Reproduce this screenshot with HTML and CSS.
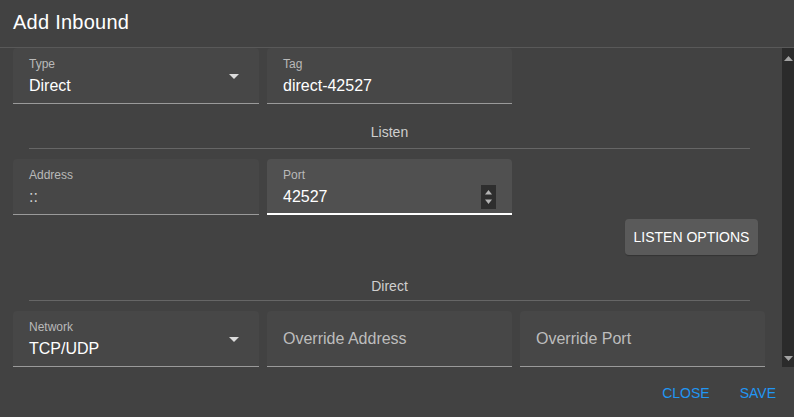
FILE: index.html
```html
<!DOCTYPE html>
<html>
<head>
<meta charset="utf-8">
<link rel="stylesheet" href="styles.css">
</head>
<body>
<div class="dialog">
  <header class="title">Add Inbound</header>
  <div class="body">
    <div class="content">
      <div class="row">
        <div class="field select">
          <div class="field-main">
            <div class="label">Type</div>
            <div class="value">Direct</div>
          </div>
          <svg class="caret" width="24" height="24" viewBox="0 0 24 24"><path d="M7 10l5 5 5-5z" fill="#dcdcdc"/></svg>
        </div>
        <div class="field">
          <div class="field-main">
            <div class="label">Tag</div>
            <div class="value">direct-42527</div>
          </div>
        </div>
      </div>

      <div class="divider listen"><span class="divider-text">Listen</span><div class="divider-line"></div></div>

      <div class="row">
        <div class="field">
          <div class="field-main">
            <div class="label">Address</div>
            <div class="value dim">::</div>
          </div>
        </div>
        <div class="field focused">
          <div class="field-main">
            <div class="label">Port</div>
            <div class="value">42527</div>
          </div>
          <div class="spinner">
            <svg width="15" height="24" viewBox="0 0 15 24"><path d="M4 9.5L7.5 5 11 9.5z" fill="#b4b4b4"/><path d="M4 14.5L7.5 19 11 14.5z" fill="#b4b4b4"/></svg>
          </div>
        </div>
      </div>

      <div class="btn-row"><button class="btn">LISTEN OPTIONS</button></div>

      <div class="divider direct"><span class="divider-text">Direct</span><div class="divider-line"></div></div>

      <div class="row">
        <div class="field select">
          <div class="field-main">
            <div class="label">Network</div>
            <div class="value">TCP/UDP</div>
          </div>
          <svg class="caret" width="24" height="24" viewBox="0 0 24 24"><path d="M7 10l5 5 5-5z" fill="#dcdcdc"/></svg>
        </div>
        <div class="field">
          <div class="placeholder">Override Address</div>
        </div>
        <div class="field">
          <div class="placeholder">Override Port</div>
        </div>
      </div>
    </div>
    <div class="scrollbar">
      <svg width="12" height="12" viewBox="0 0 12 12"><path d="M2 10L6.5 5 11 10z" fill="#a3a3a3"/></svg>
      <svg width="12" height="12" viewBox="0 0 12 12"><path d="M2 4L6.5 9 11 4z" fill="#a3a3a3"/></svg>
    </div>
  </div>
  <footer class="actions">
    <span class="action">CLOSE</span>
    <span class="action">SAVE</span>
  </footer>
</div>
</body>
</html>
```

FILE: styles.css
```css
* { box-sizing: border-box; }
html, body {
  margin: 0;
  padding: 0;
  background: #424242;
  width: 794px;
  height: 417px;
  overflow: hidden;
  font-family: "Liberation Sans", Arial, sans-serif;
  color: #fff;
}
.dialog {
  width: 794px;
  height: 417px;
  display: flex;
  flex-direction: column;
  background: #424242;
}
.title {
  height: 48px;
  line-height: 45px;
  padding-left: 13px;
  font-size: 20px;
  letter-spacing: 0.25px;
  color: #fff;
  border-bottom: 1px solid #595959;
}
.body {
  height: 319px;
  display: flex;
  overflow: hidden;
}
.content {
  width: 782px;
  padding: 0 17px 0 13px;
  overflow: hidden;
}
.row {
  display: grid;
  grid-template-columns: 246px 245px 245px;
  column-gap: 8px;
}
.field {
  height: 56px;
  background: #474747;
  border-radius: 4px 4px 0 0;
  border-bottom: 1px solid #9a9a9a;
  display: flex;
  padding: 0 0 0 16px;
}
.field.focused {
  background: #505050;
  border-bottom: 2px solid #ffffff;
}
.field-main {
  flex: 1;
  padding-top: 9px;
}
.label {
  font-size: 12px;
  line-height: 14px;
  color: #b9b9b9;
}
.value {
  margin-top: 5px;
  font-size: 16px;
  line-height: 20px;
  color: #fff;
}
.value.dim { color: #d0d0d0; }
.placeholder {
  padding-top: 18px;
  font-size: 16px;
  line-height: 20px;
  color: #bdbdbd;
}
.caret {
  margin-top: 16px;
  margin-right: 13px;
  flex: none;
}
.spinner {
  margin-top: 26px;
  margin-right: 16px;
  width: 15px;
  height: 24px;
  background: #2e2e2e;
  flex: none;
}
.spinner svg { display: block; }
.divider {
  margin-left: 16px;
  margin-right: 15px;
  text-align: center;
}
.divider-text {
  display: block;
  font-size: 14px;
  line-height: 16px;
  color: #cfcfcf;
}
.divider-line {
  height: 1px;
  background: #666666;
}
.divider.listen { padding-top: 20px; padding-bottom: 10px; }
.divider.listen .divider-line { margin-top: 8px; }
.divider.direct { padding-top: 23px; padding-bottom: 10px; }
.divider.direct .divider-line { margin-top: 6px; }
.btn-row {
  display: flex;
  justify-content: flex-end;
  padding-top: 4px;
  padding-right: 7px;
}
.btn {
  width: 133px;
  height: 36px;
  border: none;
  border-radius: 4px;
  background: #5a5a5a;
  color: #fff;
  font-family: "Liberation Sans", Arial, sans-serif;
  font-size: 14px;
  padding: 0;
  box-shadow: 0 2px 1px -1px rgba(0,0,0,.15), 0 1px 1px 0 rgba(0,0,0,.1);
}
.scrollbar {
  width: 12px;
  background: #2b2b2b;
  display: flex;
  flex-direction: column;
  justify-content: space-between;
  padding: 3px 0 3px 0;
}
.scrollbar svg { display: block; }
.actions {
  height: 50px;
  display: flex;
  justify-content: flex-end;
  align-items: flex-start;
  padding-top: 18px;
  padding-right: 18px;
  gap: 30px;
}
.action {
  font-size: 14px;
  line-height: 16px;
  color: #2196f3;
}
```
